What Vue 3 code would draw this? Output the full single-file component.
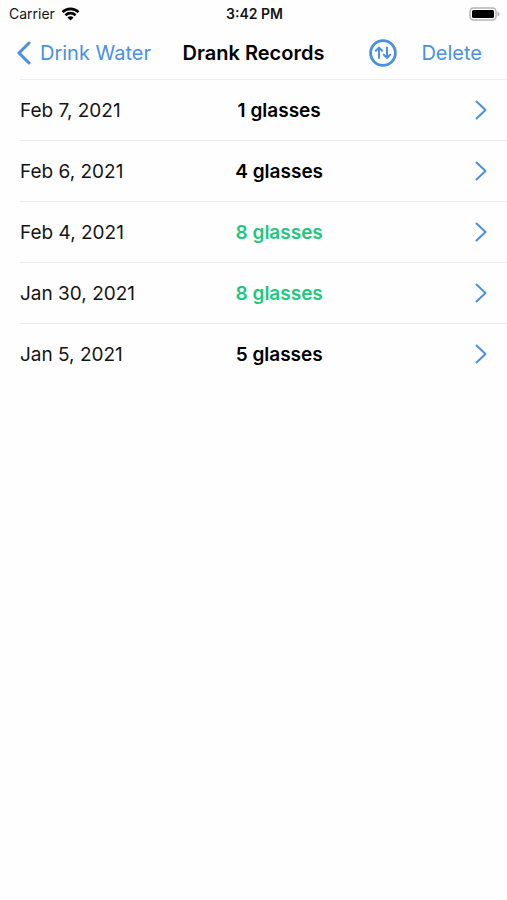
<script setup>
import { ref } from 'vue'

const records = ref([
  { date: 'Feb 7, 2021', glasses: 1 },
  { date: 'Feb 6, 2021', glasses: 4 },
  { date: 'Feb 4, 2021', glasses: 8 },
  { date: 'Jan 30, 2021', glasses: 8 },
  { date: 'Jan 5, 2021', glasses: 5 },
])

const goal = 8
</script>

<template>
  <div class="screen">
    <div class="status">
      <div class="carrier">
        <span>Carrier</span>
        <svg class="wifi" viewBox="0 0 18 14" aria-hidden="true">
          <path d="M1 5.1a11.5 11.5 0 0 1 16 0" />
          <path d="M3.9 8.2a7.4 7.4 0 0 1 10.2 0" />
          <path class="solid" d="M9 13.6 5.9 10.6a4.6 4.6 0 0 1 6.2 0z" />
        </svg>
      </div>
      <span class="time">3:42 PM</span>
      <svg class="battery" viewBox="0 0 31 14" aria-hidden="true">
        <rect class="shell" x="1" y="1" width="26" height="12" rx="3.5" />
        <rect class="charge" x="3" y="3" width="22" height="8" rx="1.5" />
        <path class="tip" d="M28.5 4.5c1.6.7 2 1.5 2 2.5s-.4 1.8-2 2.5z" />
      </svg>
    </div>

    <header class="nav">
      <a class="back" href="#">
        <svg class="back-icon" viewBox="0 0 14 24" aria-hidden="true">
          <path d="M12 2 2 12 12 22" />
        </svg>
        <span>Drink Water</span>
      </a>
      <h1>Drank Records</h1>
      <div class="actions">
        <button type="button" class="sort" aria-label="Sort">
          <svg viewBox="0 0 28 28" aria-hidden="true">
            <circle cx="14" cy="14" r="12.4" />
            <path d="M10 19V8.6M6.8 11.8 10 8.6l3.2 3.2M18 8.6V19M14.8 15.8 18 19l3.2-3.2" />
          </svg>
        </button>
        <button type="button" class="delete">Delete</button>
      </div>
    </header>

    <ul class="records">
      <li v-for="record in records" :key="record.date">
        <a class="record" href="#">
          <span>{{ record.date }}</span>
          <strong :class="{ reached: record.glasses >= goal }">{{ record.glasses }} glasses</strong>
          <svg class="chevron" viewBox="0 0 12 20" aria-hidden="true">
            <path d="M1.5 1.5 10.5 10l-9 8.5" />
          </svg>
        </a>
      </li>
    </ul>
  </div>
</template>

<style>
body {
  background: #fefefe;
}
</style>

<style scoped>
.screen {
  font-family: Inter, "Liberation Sans", sans-serif;
  font-size: 20px;
  line-height: 24px;
  color: #141414;
}

.status {
  display: grid;
  grid-template-columns: 1fr auto 1fr;
  align-items: center;
  height: 27px;
  padding: 0 7px 0 9px;
  font-size: 14px;
  line-height: 18px;
}

.carrier {
  display: flex;
  align-items: center;
  gap: 6px;
}

.wifi {
  width: 19px;
  height: 14px;
  fill: none;
  stroke: #000;
  stroke-width: 2.6;
}

.wifi .solid {
  fill: #000;
  stroke: none;
}

.time {
  font-weight: 600;
}

.battery {
  justify-self: end;
  width: 31px;
  height: 14px;
}

.shell {
  fill: #fff;
  stroke: #b4b4b4;
  stroke-width: 1.5;
}

.charge {
  fill: #000;
}

.tip {
  fill: #b4b4b4;
}

.nav {
  display: grid;
  grid-template-columns: 1fr auto 1fr;
  align-items: center;
  height: 52px;
  padding: 0 17px;
}

.back {
  display: flex;
  align-items: center;
  gap: 9px;
  color: #4a90e2;
  text-decoration: none;
  white-space: nowrap;
}

.back-icon {
  width: 14px;
  height: 24px;
  fill: none;
  stroke: currentColor;
  stroke-width: 3;
  stroke-linecap: round;
  stroke-linejoin: round;
}

h1 {
  margin: 0;
  font-size: 20px;
  font-weight: 600;
  color: #000;
  white-space: nowrap;
}

.actions {
  display: flex;
  align-items: center;
  justify-content: flex-end;
  gap: 24px;
  padding-right: 8px;
}

button {
  padding: 0;
  border: 0;
  background: none;
  font: inherit;
  color: #4a90e2;
  cursor: pointer;
}

.sort {
  display: flex;
}

.sort svg {
  width: 28px;
  height: 28px;
  fill: none;
  stroke: currentColor;
  stroke-width: 2;
  stroke-linecap: round;
  stroke-linejoin: round;
}

.sort circle {
  stroke-width: 2.8;
}

.records {
  margin: 0;
  padding: 0 0 0 20px;
  list-style: none;
  font-size: 19px;
  line-height: 25px;
}

.records li {
  border-top: 1px solid #ececec;
}

.record {
  display: grid;
  grid-template-columns: 46fr 19fr 35fr;
  align-items: center;
  min-height: 60px;
  padding-right: 20px;
  color: inherit;
  text-decoration: none;
}

strong {
  font-weight: 600;
  color: #000;
  text-align: center;
  white-space: nowrap;
}

strong.reached {
  color: #1dc87d;
}

.chevron {
  justify-self: end;
  width: 12px;
  height: 20px;
  fill: none;
  stroke: #4a90e2;
  stroke-width: 2;
  stroke-linecap: round;
  stroke-linejoin: round;
}
</style>
